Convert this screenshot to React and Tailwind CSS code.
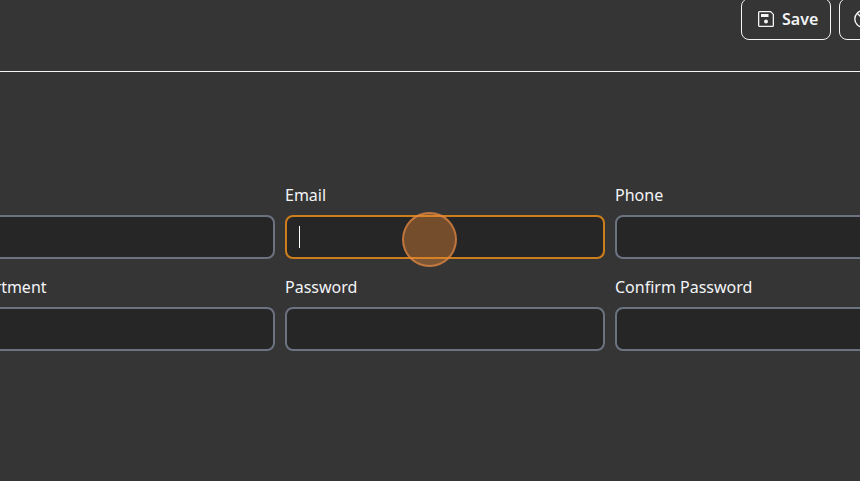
import React from "react";

function Field({ label, active = false }) {
  return (
    <label className="block w-[320px]">
      <span className="block h-6 whitespace-nowrap text-base leading-6">{label}</span>
      <span
        className={
          "mt-2 flex h-11 w-full items-center rounded-lg border-2 bg-[#262626] pl-3 " +
          (active ? "border-[#cc7d1c]" : "border-[#6b7280]")
        }
      >
        {active && <span className="h-[22px] w-px bg-white" />}
      </span>
    </label>
  );
}

function SaveIcon() {
  return (
    <svg width="16" height="16" viewBox="0 0 16 16" fill="none" className="shrink-0">
      <path d="M.65 1.5Q.65.65 1.5.65H12.6L15.35 3.4V14.5Q15.35 15.35 14.5 15.35H1.5Q.65 15.35.65 14.5Z" stroke="currentColor" strokeWidth="1.3" />
      <path d="M3 3H10.5V6H3Z" fill="currentColor" />
      <circle cx="8" cy="10.5" r="2" fill="currentColor" />
    </svg>
  );
}

function CancelIcon() {
  return (
    <svg width="18" height="18" viewBox="0 0 18 18" fill="none" stroke="currentColor" strokeWidth="1.4" className="shrink-0">
      <circle cx="9" cy="9" r="8.2" />
      <path d="M3.2 3.2L14.8 14.8" />
    </svg>
  );
}

function ToolButton({ icon, children, className }) {
  return (
    <button className={"flex h-[42px] shrink-0 items-center gap-2 rounded-lg border border-[#f3f4f6] text-base font-semibold leading-6 " + className}>
      {icon}
      <span>{children}</span>
    </button>
  );
}

export default function App() {
  return (
    <main className="relative flex h-[481px] w-[860px] flex-col overflow-hidden bg-[#353535] font-['Noto_Sans',sans-serif] text-[#f3f4f6]">
      <header className="h-[72px] shrink-0 border-b border-[#f3f4f6]">
        <div className="-mt-0.5 ml-[741px] flex gap-2">
          <ToolButton icon={<SaveIcon />} className="w-[90px] pl-4">Save</ToolButton>
          <ToolButton icon={<CancelIcon />} className="w-[106px] pl-3.5">Cancel</ToolButton>
        </div>
      </header>
      <form className="-ml-[45px] mt-[111px] grid w-[980px] shrink-0 grid-cols-[320px_320px_320px] gap-x-2.5 gap-y-4">
        <Field label="" />
        <Field label="Email" active />
        <Field label="Phone" />
        <Field label="Department" />
        <Field label="Password" />
        <Field label="Confirm Password" />
      </form>
      <div className="mt-auto h-0.5 shrink-0 bg-[#383335]" />
      <span className="absolute left-[402px] top-[212px] size-[55px] rounded-full border-2 border-[#e88b45]/65 bg-[#e88a37]/40" />
    </main>
  );
}
